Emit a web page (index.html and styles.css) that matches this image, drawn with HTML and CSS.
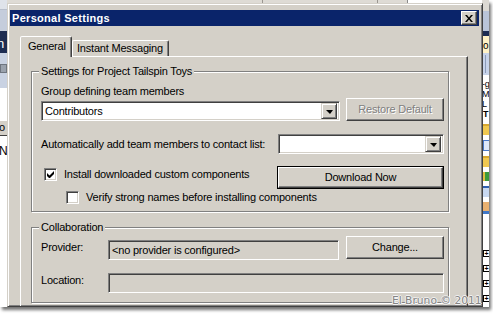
FILE: index.html
```html
<!DOCTYPE html>
<html>
<head>
<meta charset="utf-8">
<title>Personal Settings</title>
<link rel="stylesheet" href="styles.css">
</head>
<body>
<div class="shot">
  <div class="side side-left">
    <div class="seg l-tool"></div>
    <div class="seg l-blue"></div>
    <div class="seg l-navy"><span class="cut-text">n</span></div>
    <div class="seg l-light"><span class="l-icon"></span></div>
    <div class="seg l-white"></div>
    <div class="seg l-btn"><span class="cut-text">o</span></div>
    <div class="seg l-name"><span class="cut-text">Na</span></div>
    <div class="seg l-rest"></div>
  </div>

  <div class="center">
    <div class="topbar">
      <span class="tb-sep a"></span><span class="tb-sep b"></span><span class="tb-box"></span>
    </div>
    <div class="dialog">
      <div class="titlebar">
        <span class="title">Personal Settings</span>
        <span class="close">
          <svg width="8" height="7" viewBox="0 0 8 7"><path d="M0 0h2l2 2.5L6 0h2L5 3.5 8 7H6L4 4.5 2 7H0l3-3.5z" fill="#000"/></svg>
        </span>
      </div>
      <div class="body">
        <div class="tabs">
          <div class="tab active">General</div>
          <div class="tab">Instant Messaging</div>
        </div>
        <div class="panel">
          <div class="group g1">
            <div class="legend">Settings for Project Tailspin Toys</div>
            <div class="label l-group">Group defining team members</div>
            <div class="row r-group">
              <div class="combo c-group"><span class="val">Contributors</span><span class="drop"><span class="tri"></span></span></div>
              <div class="btn disabled">Restore Default</div>
            </div>
            <div class="row r-auto">
              <span class="label">Automatically add team members to contact list:</span>
              <div class="combo c-auto"><span class="val"></span><span class="drop"><span class="tri"></span></span></div>
            </div>
            <div class="row r-install">
              <div class="check">
                <span class="box">
                  <svg width="7" height="7" viewBox="0 0 7 7"><path d="M0 2v3l2 2h1l4-4V0L2.5 4.5z" fill="#000"/></svg>
                </span>
                <span>Install downloaded custom components</span>
              </div>
              <div class="btn default"><span class="btn-in">Download Now</span></div>
            </div>
            <div class="row r-verify">
              <div class="check indent">
                <span class="box"></span>
                <span>Verify strong names before installing components</span>
              </div>
            </div>
          </div>

          <div class="group g2">
            <div class="legend">Collaboration</div>
            <div class="collab">
              <span class="label f-label">Provider:</span>
              <div class="field f-provider">&lt;no provider is configured&gt;</div>
              <div class="btn">Change...</div>
              <span class="label f-label loc">Location:</span>
              <div class="field f-location"></div>
            </div>
          </div>
        </div>
      </div>
    </div>
  </div>

  <div class="side side-right">
    <div class="seg r-tool"></div>
    <div class="seg r-blue"></div>
    <div class="seg r-navy"></div>
    <div class="seg r-beige"><span class="cut-text">lo</span></div>
    <div class="seg r-light"><span class="r-line"></span></div>
    <div class="seg r-list">
      <span class="ltr">-g</span>
      <span class="ltr">M</span>
      <span class="ltr">L</span>
      <span class="ltr bold">T</span>
      <span class="ico folder"></span>
      <span class="ico list"></span>
      <span class="ico folder"></span>
      <span class="ico green"></span>
      <span class="ico cal"></span>
      <span class="ico person"></span>
      <span class="plus first">+</span>
      <span class="plus">+</span>
      <span class="plus">+</span>
      <span class="plus">+</span>
    </div>
  </div>

  <div class="watermark">El Bruno © 2011</div>
</div>
</body>
</html>
```

FILE: styles.css
```css
html, body {
  margin: 0;
  padding: 0;
  background: #ffffff;
}

body {
  font-family: "Liberation Sans", Arial, sans-serif;
  font-size: 11px;
  letter-spacing: -0.2px;
  color: #000;
  width: 493px;
  height: 314px;
  overflow: hidden;
}

.shot {
  position: relative;
  display: flex;
  width: 489px;
  height: 307px;
  overflow: hidden;
  box-shadow: 2px 3px 3px rgba(0, 0, 0, 0.55);
}

/* ---------- background application strips ---------- */
.side {
  display: flex;
  flex-direction: column;
  flex: none;
  overflow: hidden;
}
.side-left { width: 7px; }
.side-right { width: 6px; background: #fff; }

.seg { flex: none; overflow: hidden; position: relative; }
.cut-text { display: block; white-space: nowrap; line-height: 13px; }

.l-tool { height: 10px; background: #dfe3ea; border-bottom: 1px solid #b8bfcc; box-sizing: border-box; }
.l-blue { height: 21px; background: #c5cddc; }
.l-navy { height: 22px; background: #1d2c52; color: #fff; font-size: 13px; }
.l-navy .cut-text { margin: 6px 0 0 -3px; }
.l-light { height: 35px; background: #c9d2e2; }
.l-icon { display: block; width: 7px; height: 9px; margin: 11px 0 0 0; background: #9aa2ad; border: 1px solid #6f7680; box-sizing: border-box; }
.l-white { height: 32px; background: #fff; }
.l-btn { height: 16px; background: #d4d0c8; border-top: 1px solid #fff; border-bottom: 1px solid #404040; box-sizing: border-box; }
.l-btn .cut-text { margin: 0 0 0 -1px; }
.l-name { height: 26px; background: #fff; }
.l-name .cut-text { margin: 9px 0 0 -1px; font-size: 12px; }
.l-rest { flex: 1; background: #fff; }

.r-tool { height: 11px; background: #dcd9d3; }
.r-blue { height: 20px; background: #b9c4d8; }
.r-navy { height: 5px; background: #1d2c52; }
.r-beige { height: 17px; background: #fff2c6; }
.r-beige .cut-text { margin: 4px 0 0 -2px; font-size: 10px; line-height: 12px; }
.r-light { height: 22px; background: #c7d3ea; }
.r-line { display: block; width: 1px; height: 18px; margin: 2px 0 0 2px; background: #8c9bb8; }
.r-list { flex: 1; display: flex; flex-direction: column; padding-top: 4px; }
.ltr { display: block; height: 10px; line-height: 10px; font-size: 9px; white-space: nowrap; margin-left: -1px; overflow: hidden; }
.ltr.bold { font-weight: bold; margin-left: 0; }
.ico { display: block; width: 6px; height: 9px; margin-top: 5px; }
.ico.folder { background: #f0c850; border-top: 2px solid #d8a830; }
.ico.list { background: #dfe8f8; border: 1px solid #4a78c8; }
.ico.green { background: #3c9a3c; border-left: 2px solid #e0c040; }
.ico.cal { background: #c8d8f0; border-top: 2px solid #3060b0; }
.ico.person { background: #e8b070; border-bottom: 3px solid #4078c8; }
.plus {
  display: block;
  width: 7px; height: 7px;
  margin-top: 8px;
  border: 1px solid #000;
  font-size: 7px; line-height: 5px; text-align: center;
  font-weight: bold;
  box-sizing: border-box;
  overflow: hidden;
  letter-spacing: 0;
}
.plus.first { margin-top: 36px; }

/* ---------- center column ---------- */
.center {
  width: 476px;
  flex: none;
  display: flex;
  flex-direction: column;
}
.topbar {
  height: 3px;
  flex: none;
  background: #dedbd5;
  display: flex;
}
.tb-sep { width: 1px; background: #9a9690; }
.tb-sep.a { margin-left: 255px; }
.tb-sep.b { margin-left: 114px; }
.tb-box { margin-left: 29px; width: 74px; background: #fff; border-left: 1px solid #8a8a8a; }

.dialog {
  flex: 1;
  background: #d4d0c8;
  border: 1px solid;
  border-color: #d4d0c8 #404040 #404040 #d4d0c8;
  box-shadow: inset 1px 1px #fff, inset -1px -1px #808080;
  padding: 6px 3px 0 2px;
  overflow: hidden;
}

.titlebar {
  height: 16px;
  background: #0a246a;
  display: flex;
  align-items: center;
  justify-content: space-between;
  padding: 0 2px 0 2px;
}
.title {
  color: #fff;
  font-weight: bold;
  font-size: 11px;
  letter-spacing: 0.3px;
}
.close {
  width: 16px;
  height: 14px;
  box-sizing: border-box;
  background: #d4d0c8;
  border: 1px solid;
  border-color: #fff #404040 #404040 #fff;
  box-shadow: inset -1px -1px #808080;
  display: flex;
  align-items: center;
  justify-content: center;
  padding-right: 1px;
}

.body {
  padding: 10px 10px 0 10px;
}

/* ---------- tabs ---------- */
.tabs {
  display: flex;
  align-items: flex-end;
  height: 20px;
}
.tab {
  height: 16px;
  box-sizing: border-box;
  border: 1px solid;
  border-bottom: none;
  border-color: #fff #404040 transparent #fff;
  box-shadow: inset -1px 0 #808080;
  border-radius: 2px 2px 0 0;
  padding: 0 5px 0 4px;
  line-height: 15px;
  white-space: nowrap;
}
.tab.active {
  position: relative;
  z-index: 1;
  height: 21px;
  margin-bottom: -1px;
  background: #d4d0c8;
  padding: 0 7px 0 7px;
  line-height: 19px;
  width: 52px;
}

.panel {
  width: 448px;
  box-sizing: border-box;
  border: 1px solid;
  border-color: #fff #404040 #404040 #fff;
  box-shadow: inset -1px -1px #808080;
  padding: 14px 0 20px 10px;
}

/* ---------- group boxes ---------- */
.group {
  width: 418px;
  box-sizing: border-box;
  border: 1px solid #808080;
  box-shadow: inset 1px 1px #fff, 1px 1px #fff;
  padding: 0 4px 0 9px;
}
.g1 { padding-bottom: 7px; }
.g2 { margin-top: 15px; padding-bottom: 9px; }

.legend {
  width: max-content;
  margin: -7px 0 0 -2px;
  padding: 0 2px;
  background: #d4d0c8;
  line-height: 13px;
}

.label { line-height: 13px; white-space: nowrap; }
.l-group { margin-top: 7px; }

.row {
  display: flex;
  justify-content: space-between;
}
.r-group { align-items: flex-end; }
.r-auto { margin-top: 13px; align-items: center; }
.r-install { margin-top: 12px; align-items: flex-start; }
.r-verify { margin-top: 2px; }

/* ---------- controls ---------- */
.combo {
  height: 20px;
  box-sizing: border-box;
  background: #fff;
  border: 1px solid;
  border-color: #808080 #fff #fff #808080;
  box-shadow: inset 1px 1px #404040, inset -1px -1px #d4d0c8;
  display: flex;
  align-items: center;
  padding: 2px;
}
.c-group { width: 299px; }
.c-auto { width: 166px; }
.combo .val { flex: 1; padding-left: 1px; line-height: 13px; }
.drop {
  width: 16px;
  height: 16px;
  box-sizing: border-box;
  background: #d4d0c8;
  border: 1px solid;
  border-color: #d4d0c8 #404040 #404040 #d4d0c8;
  box-shadow: inset 1px 1px #fff, inset -1px -1px #808080;
  display: flex;
  align-items: center;
  justify-content: center;
}
.tri {
  width: 0; height: 0;
  border-left: 4px solid transparent;
  border-right: 3px solid transparent;
  border-top: 4px solid #000;
  margin-top: 1px;
}

.btn {
  width: 98px;
  height: 23px;
  box-sizing: border-box;
  background: #d4d0c8;
  border: 1px solid;
  border-color: #fff #404040 #404040 #fff;
  box-shadow: inset -1px -1px #808080;
  display: flex;
  align-items: center;
  justify-content: center;
  line-height: 13px;
  white-space: nowrap;
}
.btn.disabled {
  color: #808080;
  text-shadow: 1px 1px #fff;
}
.btn.default {
  width: 167px;
  border: 1px solid #000;
  box-shadow: none;
  padding: 0;
}
.btn-in {
  width: 100%;
  height: 100%;
  box-sizing: border-box;
  border: 1px solid;
  border-color: #fff #404040 #404040 #fff;
  box-shadow: inset -1px -1px #808080;
  display: flex;
  align-items: center;
  justify-content: center;
}

.check {
  display: flex;
  align-items: center;
  line-height: 13px;
  padding-left: 3px;
  margin-top: 2px;
  white-space: nowrap;
}
.check.indent { padding-left: 25px; margin-top: 0; }
.box {
  width: 13px;
  height: 13px;
  box-sizing: border-box;
  flex: none;
  margin-right: 7px;
  background: #fff;
  border: 1px solid;
  border-color: #808080 #fff #fff #808080;
  box-shadow: inset 1px 1px #404040, inset -1px -1px #d4d0c8;
  display: flex;
  align-items: center;
  justify-content: center;
}

.collab {
  margin-top: 2px;
  display: grid;
  grid-template-columns: 60px 231px 98px;
  column-gap: 7px;
  justify-content: start;
  align-items: start;
}
.collab .btn { grid-column: 3; }
.f-label { margin-top: 5px; }
.f-label.loc { margin-top: 14px; }
.field {
  height: 20px;
  box-sizing: border-box;
  border: 1px solid;
  border-color: #808080 #fff #fff #808080;
  box-shadow: inset 1px 1px #404040, inset -1px -1px #d4d0c8;
  background: #d4d0c8;
  padding: 2px 3px;
  line-height: 14px;
  white-space: nowrap;
}
.f-provider { margin-top: 4px; }
.f-location { grid-column: 2 / 4; margin-top: 13px; }

/* ---------- watermark ---------- */
.watermark {
  position: absolute;
  left: 392px;
  top: 295px;
  font-family: "DejaVu Sans", sans-serif;
  font-size: 10.7px;
  letter-spacing: 0;
  line-height: 12px;
  color: #858585;
  text-shadow: 1px 0 #f2f2f2, -1px 0 #f2f2f2, 0 1px #f2f2f2, 0 -1px #f2f2f2;
  white-space: nowrap;
}
```
